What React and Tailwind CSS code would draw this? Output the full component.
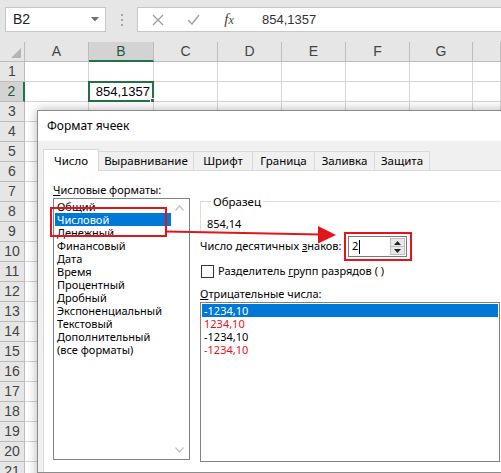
import React from "react";

const cols = [
  ["A", 64],
  ["B", 65],
  ["C", 64],
  ["D", 64],
  ["E", 64],
  ["F", 64],
  ["G", 63],
  ["", 28],
];

const formats = [
  "Общий",
  "Числовой",
  "Денежный",
  "Финансовый",
  "Дата",
  "Время",
  "Процентный",
  "Дробный",
  "Экспоненциальный",
  "Текстовый",
  "Дополнительный",
  "(все форматы)",
];

const negs = [
  ["-1234,10", "sel"],
  ["1234,10", "red"],
  ["-1234,10", "black"],
  ["-1234,10", "red"],
];

const tabs = ["Число", "Выравнивание", "Шрифт", "Граница", "Заливка", "Защита"];
const tabW = [56, 95, 59, 62, 60, 55];

function Sheet() {
  const rows = Array.from({ length: 21 }, (_, i) => i + 1);
  return (
    <div className="flex flex-col font-['Liberation_Sans',sans-serif]">
      {/* formula bar */}
      <div className="h-[42px] bg-[#e6e6e6] flex items-start pt-[7px]">
        <div className="ml-[5px] w-[101px] h-[25px] shrink-0 bg-white border border-[#c6c6c6] flex items-center pl-[7px] pr-[6px] text-[14px] text-[#222]">
          <span className="flex-1">B2</span>
          <svg width="8" height="5" viewBox="0 0 8 5">
            <path d="M0 0 L8 0 L4 4.5 Z" fill="#707070" />
          </svg>
        </div>
        <div className="w-[31px] h-[25px] shrink-0 flex flex-col items-center justify-center gap-[3px]">
          <span className="w-[2px] h-[2px] bg-[#a8a8a8]" />
          <span className="w-[2px] h-[2px] bg-[#a8a8a8]" />
          <span className="w-[2px] h-[2px] bg-[#a8a8a8]" />
        </div>
        <div className="flex-1 h-[25px] bg-white border border-[#c6c6c6] border-r-0 flex items-center">
          <div className="w-[40px] flex justify-center">
            <svg width="12" height="12" viewBox="0 0 12 12">
              <path d="M1 1 L11 11 M11 1 L1 11" stroke="#a0a0a0" strokeWidth="1.3" />
            </svg>
          </div>
          <div className="w-[30px] flex justify-center">
            <svg width="13" height="11" viewBox="0 0 13 11">
              <path d="M1 6 L5 10 L12 1" stroke="#a0a0a0" strokeWidth="1.4" fill="none" />
            </svg>
          </div>
          <div className="w-[42px] flex justify-center text-[#444] italic font-['Liberation_Serif',serif] text-[15px]">
            <span>f</span>
            <span className="text-[12px] mt-[3px]">x</span>
          </div>
          <span className="ml-[12px] text-[13px] text-[#333]">854,1357</span>
        </div>
      </div>
      {/* column header */}
      <div className="flex h-[20px]">
        <div className="w-[25px] shrink-0 h-[20px] bg-[#e6e6e6] border-r border-b border-[#bcbcbc] flex items-end justify-end pr-[3px] pb-[3px]">
          <svg width="10" height="10" viewBox="0 0 10 10">
            <path d="M10 0 L10 10 L0 10 Z" fill="#b5b5b5" />
          </svg>
        </div>
        {cols.map(([c, w], i) =>
          c === "B" ? (
            <div
              key={i}
              style={{ width: w }}
              className="shrink-0 h-[20px] bg-[#d3d3d3] border-r border-[#bcbcbc] border-b-2 border-b-[#217346] flex items-center justify-center text-[14px] text-[#1e5a3a]"
            >
              {c}
            </div>
          ) : (
            <div
              key={i}
              style={{ width: w }}
              className="shrink-0 h-[20px] bg-[#e6e6e6] border-r border-b border-[#bcbcbc] flex items-center justify-center text-[14px] text-[#444]"
            >
              {c}
            </div>
          )
        )}
      </div>
      {rows.map((r) => (
        <div key={r} className="flex h-[20px]">
          {r === 2 ? (
            <div className="w-[25px] shrink-0 h-[20px] bg-[#d3d3d3] border-r-2 border-r-[#217346] border-b border-b-[#bcbcbc] flex items-center justify-center text-[14px] text-[#1e5a3a]">
              {r}
            </div>
          ) : (
            <div className="w-[25px] shrink-0 h-[20px] bg-[#e6e6e6] border-r border-b border-[#bcbcbc] flex items-center justify-center text-[14px] text-[#444]">
              {r}
            </div>
          )}
          {cols.map(([c, w], i) => (
            <div
              key={i}
              style={{ width: w }}
              className="relative shrink-0 h-[20px] bg-white border-r border-b border-[#d4d4d4]"
            >
              {r === 2 && c === "B" && (
                <div className="absolute left-[-1px] top-[-1px] w-[66px] h-[21px] border-2 border-[#217346] flex items-center justify-end pr-[2px] text-[13px] text-black">
                  854,1357
                  <span className="absolute right-[-4px] bottom-[-4px] w-[6px] h-[6px] bg-[#217346] border border-white" />
                </div>
              )}
            </div>
          ))}
        </div>
      ))}
    </div>
  );
}

function Dialog() {
  return (
    <div className="absolute left-[37px] top-[110px] w-[480px] h-[380px] bg-[#f0f0f0] border border-[#8c8c8c] shadow-[0_0_10px_rgba(0,0,0,0.3)] flex flex-col font-['Noto_Sans',sans-serif] text-[11px] text-black">
      <div className="h-[30px] bg-white flex items-center pl-[9px] text-[12px]">Формат ячеек</div>
      <div className="flex-1 flex flex-col pt-[8px] pl-[5px]">
        <div className="flex items-end h-[21px]">
          {tabs.map((t, i) =>
            i === 0 ? (
              <div
                key={t}
                style={{ width: tabW[i] }}
                className="h-[22px] bg-white border border-b-0 border-[#d9d9d9] flex items-center justify-center relative z-10 mb-[-1px] text-[11.5px]"
              >
                {t}
              </div>
            ) : (
              <div
                key={t}
                style={{ width: tabW[i] }}
                className="h-[19px] border border-l-0 border-b-0 border-[#d9d9d9] flex items-center justify-center text-[11.5px]"
              >
                {t}
              </div>
            )
          )}
        </div>
        <div className="flex-1 bg-white border border-[#d9d9d9] flex">
          {/* left column */}
          <div className="ml-[9px] w-[137px] shrink-0 flex flex-col pt-[11px]">
            <div className="h-[15px] leading-[15px] whitespace-nowrap">
              <span className="underline">Ч</span>исловые форматы:
            </div>
            <div className="mt-[1px] h-[262px] border border-[#828282] flex p-[1px]">
              <div className="flex-1 flex flex-col">
                {formats.map((f, i) =>
                  i === 1 ? (
                    <div key={f} className="h-[13px] leading-[13px] bg-[#0078d7] text-white pl-[2px] whitespace-nowrap">
                      {f}
                    </div>
                  ) : (
                    <div key={f} className="h-[13px] leading-[13px] pl-[2px] whitespace-nowrap">
                      {f}
                    </div>
                  )
                )}
              </div>
              <div className="w-[17px] flex flex-col items-center justify-between py-[5px]">
                <svg width="9" height="6" viewBox="0 0 9 6">
                  <path d="M0.5 5.5 L4.5 1 L8.5 5.5" stroke="#c4c4c4" strokeWidth="1.3" fill="none" />
                </svg>
                <svg width="9" height="6" viewBox="0 0 9 6">
                  <path d="M0.5 0.5 L4.5 5 L8.5 0.5" stroke="#c4c4c4" strokeWidth="1.3" fill="none" />
                </svg>
              </div>
            </div>
          </div>
          {/* right column */}
          <div className="ml-[10px] w-[300px] shrink-0 flex flex-col pt-[23px]">
            <fieldset className="border-t border-l border-[#dcdcdc] pl-[6px] h-[38px]">
              <legend className="ml-[4px] px-[2px] h-[15px] leading-[15px] text-[11.5px]">Образец</legend>
              <div className="mt-[7px] h-[15px] leading-[15px]">854,14</div>
            </fieldset>
            <div className="mt-[4px] h-[21px] flex items-center">
              <span className="w-[148px] whitespace-nowrap">
                Число десятичных <span className="underline">з</span>наков:
              </span>
              <div className="w-[59px] h-[21px] border border-[#7a7a7a] flex items-center">
                <span className="pl-[3px] flex-1 flex items-center">
                  2<span className="ml-[1px] w-[1px] h-[14px] bg-black" />
                </span>
                <div className="w-[15px] h-[17px] mr-[1px] flex flex-col">
                  <div className="flex-1 bg-[#e8e8e8] border border-[#c0c0c0] flex items-center justify-center">
                    <svg width="7" height="4" viewBox="0 0 7 4">
                      <path d="M0 4 L3.5 0 L7 4 Z" fill="#222" />
                    </svg>
                  </div>
                  <div className="flex-1 bg-[#e8e8e8] border border-t-0 border-[#c0c0c0] flex items-center justify-center">
                    <svg width="7" height="4" viewBox="0 0 7 4">
                      <path d="M0 0 L7 0 L3.5 4 Z" fill="#222" />
                    </svg>
                  </div>
                </div>
              </div>
            </div>
            <div className="mt-[8px] h-[13px] flex items-center">
              <span className="ml-[1px] w-[13px] h-[13px] border border-[#333] bg-white" />
              <span className="ml-[4px] whitespace-nowrap">
                Разделитель <span className="underline">г</span>рупп разрядов ( )
              </span>
            </div>
            <div className="mt-[8px] h-[15px] leading-[15px]">
              <span className="underline">О</span>трицательные числа:
            </div>
            <div className="mt-[1px] h-[160px] border border-[#828282] p-[1px]">
              {negs.map(([t, k], i) =>
                k === "sel" ? (
                  <div key={i} className="h-[13px] leading-[13px] bg-[#0078d7] text-white pl-[2px]">
                    {t}
                  </div>
                ) : k === "red" ? (
                  <div key={i} className="h-[13px] leading-[13px] text-[#e81123] pl-[2px]">
                    {t}
                  </div>
                ) : (
                  <div key={i} className="h-[13px] leading-[13px] pl-[2px]">
                    {t}
                  </div>
                )
              )}
            </div>
          </div>
        </div>
      </div>
    </div>
  );
}

export default function App() {
  return (
    <div className="relative w-[501px] h-[473px] overflow-hidden bg-white">
      <Sheet />
      <Dialog />
      {/* annotations */}
      <div className="absolute left-[50px] top-[207px] w-[117px] h-[30px] border-2 border-[#e3141c]" />
      <div className="absolute left-[344px] top-[232px] w-[68px] h-[29px] border-2 border-[#e3141c]" />
      <svg className="absolute left-0 top-0" width="501" height="473" viewBox="0 0 501 473">
        <path d="M166 231.5 L320 234.6" stroke="#e3141c" strokeWidth="2" fill="none" />
        <path d="M318 226 L336 235 L318 243.5 Z" fill="#e3141c" />
      </svg>
      <div className="absolute left-[37px] bottom-0 w-[464px] h-[1px] bg-[#8c8c8c]" />
    </div>
  );
}
